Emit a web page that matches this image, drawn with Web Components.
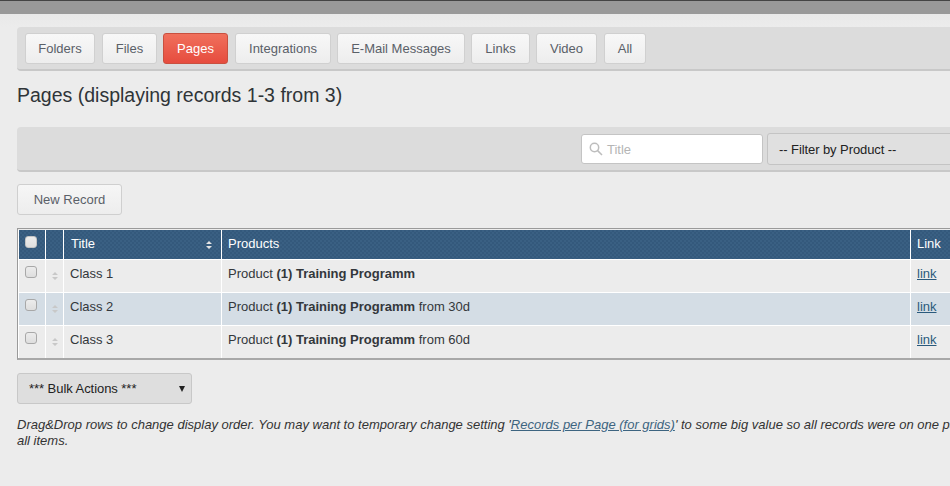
<!DOCTYPE html>
<html>
<head>
<meta charset="utf-8">
<title>Pages</title>
<style>
  html, body { margin: 0; height: 100%; overflow: hidden; }
  body { background: #ececec; font: 13px "Liberation Sans", Arial, sans-serif; color: #333; width: 950px; }
</style>
</head>
<body>
<top-strip></top-strip>
<page-content>
  <tab-bar>
    <tab-button style="--w:70px;margin-right:1px">Folders</tab-button>
    <tab-button style="--w:55px">Files</tab-button>
    <tab-button style="--w:65px;margin-right:1px" active>Pages</tab-button>
    <tab-button style="--w:96px">Integrations</tab-button>
    <tab-button style="--w:128px">E-Mail Messages</tab-button>
    <tab-button style="--w:59px">Links</tab-button>
    <tab-button style="--w:61px;margin-right:1px">Video</tab-button>
    <tab-button style="--w:42px">All</tab-button>
  </tab-bar>
  <page-title>Pages (displaying records 1-3 from 3)</page-title>
  <filter-bar>
    <search-box placeholder="Title"></search-box>
    <filter-select>-- Filter by Product --</filter-select>
  </filter-bar>
  <new-button>New Record</new-button>
  <data-grid>
    <grid-head></grid-head>
    <grid-row title="Class 1"><b>(1) Training Programm</b></grid-row>
    <grid-row title="Class 2" alt><b>(1) Training Programm</b> from 30d</grid-row>
    <grid-row title="Class 3"><b>(1) Training Programm</b> from 60d</grid-row>
  </data-grid>
  <bulk-select>*** Bulk Actions ***</bulk-select>
  <help-note>Drag&amp;Drop rows to change display order. You may want to temporary change setting '<a>Records per Page (for grids)</a>' to some big value so all records were on one page<br>all items.</help-note>
</page-content>

<script>
const SORT_ICON = (color) => `<svg width="6" height="8" viewBox="0 0 6 8"><path d="M3 0L6 3H0Z M3 8L0 5H6Z" fill="${color}"/></svg>`;
const CHECKBOX_CSS = `
  .check { box-sizing: border-box; display: block; width: 12px; height: 12px; border: 1px solid #a8a8a8; border-radius: 3px;
    background: linear-gradient(#ececec, #dedede); }
`;

function define(name, html) {
  customElements.define(name, class extends HTMLElement {
    constructor() {
      super();
      this.attachShadow({ mode: "open" });
    }
    connectedCallback() {
      this.shadowRoot.innerHTML = typeof html === "function" ? html(this) : html;
    }
  });
}

define("top-strip", `
  <style>
    :host { display: block; height: 27px; background: linear-gradient(#efefef, #e8e8e8 40%, #ececec); }
    .bar { height: 13px; background: #999; border-top: 1px solid #444; }
  </style>
  <div class="bar"></div>
`);

define("page-content", `
  <style>
    :host { display: block; padding-left: 17px; }
  </style>
  <slot></slot>
`);

define("tab-bar", `
  <style>
    :host { display: flex; gap: 6px; box-sizing: border-box; height: 44px; padding: 6px 8px; background: #dcdcdc;
      border-bottom: 2px solid #c8c8c8; border-radius: 4px 0 0 4px; }
  </style>
  <slot></slot>
`);

define("tab-button", (el) => `
  <style>
    :host { display: block; box-sizing: border-box; width: var(--w); height: 31px; line-height: 29px; text-align: center;
      color: ${el.hasAttribute("active") ? "#fff" : "#5a6068"}; border-radius: 3px; font-size: 13px;
      border: 1px solid ${el.hasAttribute("active") ? "#c9503f" : "#d0d0d0"};
      background: ${el.hasAttribute("active") ? "linear-gradient(#f0705c, #e64c3e)" : "linear-gradient(#f8f8f8, #ededed)"}; }
  </style>
  <slot></slot>
`);

define("page-title", `
  <style>
    :host { display: block; height: 56px; padding-top: 12px; box-sizing: border-box; font-size: 19.5px; line-height: 24px; color: #2f3438; }
  </style>
  <slot></slot>
`);

define("filter-bar", `
  <style>
    :host { display: flex; justify-content: flex-start; align-items: center; gap: 4px; box-sizing: border-box; height: 45px;
      padding-left: 564px; background: #dcdcdc; border-bottom: 2px solid #c8c8c8; border-radius: 4px 0 0 4px; }
  </style>
  <slot></slot>
`);

define("search-box", (el) => `
  <style>
    :host { display: flex; align-items: center; gap: 4px; box-sizing: border-box; width: 182px; height: 30px; padding-left: 7px;
      background: #fff; border: 1px solid #c4c4c4; border-radius: 3px; color: #b5b5b5; font-size: 13px; flex: none; }
    span { padding-top: 2px; }
  </style>
  <svg width="14" height="14" viewBox="0 0 14 14" fill="none" stroke="#bdbdbd" stroke-width="1.5"><circle cx="5.5" cy="5.5" r="4.2"/><path d="M8.6 8.6L13 13"/></svg>
  <span>${el.getAttribute("placeholder")}</span>
`);

define("filter-select", `
  <style>
    :host { display: block; box-sizing: border-box; width: 240px; height: 32px; line-height: 32px; padding-left: 11px; flex: none;
      background: #e0e0e0; border: 1px solid #c4c4c4; border-radius: 3px; color: #222; font-size: 13px; letter-spacing: -0.08px; }
  </style>
  <slot></slot>
`);

define("new-button", `
  <style>
    :host { display: block; box-sizing: border-box; width: 105px; height: 31px; margin-top: 12px; line-height: 29px; text-align: center;
      color: #5a6068; background: linear-gradient(#f6f6f6, #ededed); border: 1px solid #cfcfcf; border-radius: 3px; }
  </style>
  <slot></slot>
`);

define("data-grid", `
  <style>
    :host { display: block; box-sizing: border-box; width: 960px; margin-top: 13px; border: 1px solid #9a9a9a; border-bottom-width: 2px; padding-top: 1px;
      border-bottom-color: #a8a8a8; }
  </style>
  <slot></slot>
`);

const ROW_CSS = `
  ${CHECKBOX_CSS}
  :host { display: grid; grid-template-columns: 27px 18px 158px 689px 1fr; }
  .cell { box-sizing: border-box; padding-left: 6px; border-left: 1px solid #fff; font-size: 13px; white-space: nowrap; }
  .cell:first-child { border-left: 0; padding-left: 7px; }
`;

define("grid-head", `
  <style>
    ${ROW_CSS}
    :host { height: 30px; box-sizing: border-box; color: #fff; border-bottom: 1px solid #fff;
      background: repeating-conic-gradient(#34597c 0 25%, #3a6083 0 50%) 0 0 / 4px 4px; }
    .cell { line-height: 28px; }
    .title { display: flex; justify-content: space-between; align-items: flex-start; padding: 0 9px 0 7px; }
    .title svg { margin-top: 11px; }
    .check { margin-top: 6px; border-color: #c4c4c4; background: linear-gradient(#ececec, #e0e0e0); }
  </style>
  <div class="cell"><span class="check"></span></div>
  <div class="cell"></div>
  <div class="cell title"><span>Title</span>${SORT_ICON("#e4e4e4")}</div>
  <div class="cell">Products</div>
  <div class="cell">Link</div>
`);

define("grid-row", (el) => `
  <style>
    ${ROW_CSS}
    :host { height: 33px; background: ${el.hasAttribute("alt") ? "#d4dde5" : "#ececec"}; color: #33373b; border-bottom: 1px solid #fff; box-sizing: border-box; }
    :host(:last-child) { border-bottom: 0; height: 32px; }
    .cell { line-height: 27px; }
    .check { margin-top: 6px; }
    .drag { padding: 12px 0 0 6px; line-height: 0; }
    a { color: #2a5a7c; text-decoration: underline; }
  </style>
  <div class="cell"><span class="check"></span></div>
  <div class="cell drag">${SORT_ICON("#c8c8c8")}</div>
  <div class="cell">${el.getAttribute("title")}</div>
  <div class="cell">Product <slot></slot></div>
  <div class="cell"><a>link</a></div>
`);

define("bulk-select", `
  <style>
    :host { display: flex; justify-content: space-between; align-items: center; box-sizing: border-box; width: 175px; height: 31px; margin-top: 13px;
      padding: 0 6px 0 11px; background: #dedede; border: 1px solid #c8c8c8; border-radius: 3px; color: #222; letter-spacing: -0.05px; }
    i { width: 0; height: 0; border: 3.5px solid transparent; border-top: 6px solid #222; border-bottom: 0; }
  </style>
  <slot></slot><i></i>
`);

define("help-note", `
  <style>
    :host { display: block; margin-top: 13px; width: 1000px; white-space: nowrap; font-style: italic; line-height: 16px; color: #333; }
    ::slotted(a) { color: #3d6480; text-decoration: underline; }
  </style>
  <slot></slot>
`);
</script>
</body>
</html>
